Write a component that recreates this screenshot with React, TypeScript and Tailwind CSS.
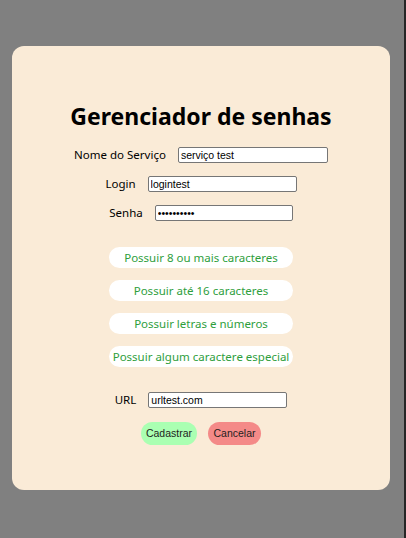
const rules = [
  "Possuir 8 ou mais caracteres",
  "Possuir até 16 caracteres",
  "Possuir letras e números",
  "Possuir algum caractere especial",
];

const inputClass =
  "h-[16px] px-[2px] bg-white border border-[#767676] rounded-[2px] text-[10.5px] text-black font-['Liberation_Sans',Arial,sans-serif] outline-none";

const Field = ({
  label,
  value,
  width,
  type = "text",
}: {
  label: string;
  value: string;
  width: string;
  type?: string;
}) => (
  <label className="flex items-center justify-center gap-[12px] h-[16px]">
    <span className="text-[11.5px] text-black">{label}</span>
    <input type={type} defaultValue={value} className={`${inputClass} ${width}`} />
  </label>
);

export default function App() {
  return (
    <div className="min-h-[538px] bg-[#808080] border-r-2 border-[#262626] pt-[46px] pl-[12px] pr-[14px] font-['Noto_Sans',sans-serif]">
      <div className="h-[444px] rounded-[12px] bg-[#FAEBD7] flex flex-col items-center pt-[55px]">
        <h1 className="text-[23px] leading-[30px] font-bold text-black">
          Gerenciador de senhas
        </h1>

        <div className="flex flex-col gap-[13px] mt-[16px]">
          <Field label="Nome do Serviço" value="serviço test" width="w-[150px]" />
          <Field label="Login" value="logintest" width="w-[149px]" />
          <Field label="Senha" value="abcdefghij" width="w-[138px]" type="password" />
        </div>

        {/* Requisitos da senha */}
        <ul className="flex flex-col gap-[12px] mt-[26px]">
          {rules.map((rule) => (
            <li
              key={rule}
              className="w-[184px] h-[21px] rounded-full bg-white flex items-center justify-center text-[11.5px] text-[#2e9e3c] whitespace-nowrap"
            >
              {rule}
            </li>
          ))}
        </ul>

        <div className="mt-[25px]">
          <Field label="URL" value="urltest.com" width="w-[139px]" />
        </div>

        <div className="flex gap-[11px] mt-[14px] font-['Liberation_Sans',Arial,sans-serif] text-[10.5px] text-[#1e1e1e]">
          <button className="w-[56px] h-[23px] rounded-full bg-[#aaffb2]">Cadastrar</button>
          <button className="w-[53px] h-[23px] rounded-full bg-[#f48a88]">Cancelar</button>
        </div>
      </div>
    </div>
  );
}
